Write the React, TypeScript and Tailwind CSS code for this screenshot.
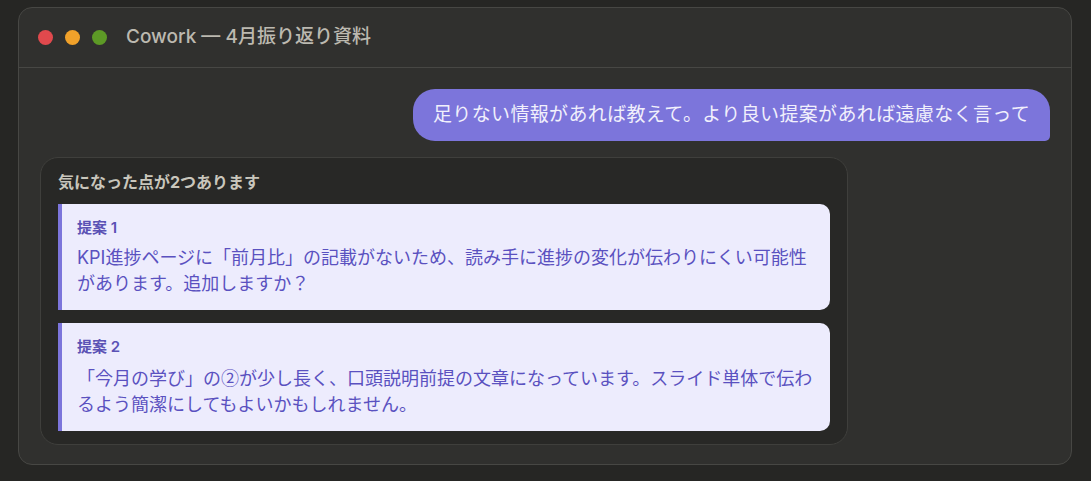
const font = {
  fontFamily: '"Inter", "Noto Sans CJK JP", sans-serif',
};

type Suggestion = { label: string; body: string; cjkOnly?: boolean };

const suggestions: Suggestion[] = [
  {
    label: "提案 1",
    body: "KPI進捗ページに「前月比」の記載がないため、読み手に進捗の変化が伝わりにくい可能性があります。追加しますか？",
  },
  {
    label: "提案 2",
    // ② should come from the CJK font, Inter's version is too wide
    body: "「今月の学び」の②が少し長く、口頭説明前提の文章になっています。スライド単体で伝わるよう簡潔にしてもよいかもしれません。",
    cjkOnly: true,
  },
];

function SuggestionCard({ s }: { s: Suggestion }) {
  return (
    <div
      className={
        s.cjkOnly
          ? "rounded-r-[10px] border-l-[4px] border-[#7c75db] bg-[#edecfd] pl-[15px] pr-[12px] pt-[14px] pb-[15px]"
          : "rounded-r-[10px] border-l-[4px] border-[#7c75db] bg-[#edecfd] pl-[15px] pr-[12px] pt-[14px] pb-[13px]"
      }
    >
      <div className="text-[15px] leading-[20px] font-semibold text-[#5b52b5]">{s.label}</div>
      <p
        className="mt-[7px] text-[18px] leading-[26px] text-[#5a51c0]"
        style={s.cjkOnly ? { fontFamily: '"Noto Sans CJK JP", sans-serif' } : undefined}
      >
        {s.body}
      </p>
    </div>
  );
}

export default function App() {
  return (
    <div className="min-h-screen w-full bg-[#262624] pt-[7px] pl-[18px]" style={font}>
      <div className="flex h-[458px] w-[1054px] flex-col rounded-[14px] border border-[#474744] bg-[#30302e]">
        {/* Title bar */}
        <div className="flex h-[60px] shrink-0 items-center border-b border-[#474744] pl-[19px]">
          <div className="flex gap-[12px]">
            <span className="block h-[15px] w-[15px] rounded-full bg-[#e0494d]" />
            <span className="block h-[15px] w-[15px] rounded-full bg-[#f0a12a]" />
            <span className="block h-[15px] w-[15px] rounded-full bg-[#5d9a26]" />
          </div>
          <div className="ml-[19px] text-[19px] font-medium text-[#bcb9b0]">Cowork — 4月振り返り資料</div>
        </div>

        {/* Conversation */}
        <div className="flex flex-1 flex-col px-[21px] pt-[21px]">
          <div className="self-end rounded-[22px] rounded-br-[5px] bg-[#7c75db] px-[20px] py-[13px] text-[19px] leading-[26px] tracking-[0.35px] text-[#f1f0fc]">
            足りない情報があれば教えて。より良い提案があれば遠慮なく言って
          </div>

          <div className="mt-[16px] w-[808px] rounded-[18px] border border-[#3f3f3c] bg-[#282826] px-[17px] pt-[14px] pb-[13px]">
            <div className="text-[16px] leading-[20px] font-bold text-[#c9c6bc]">気になった点が2つあります</div>
            <div className="mt-[12px] flex flex-col gap-[13px]">
              {suggestions.map((s) => (
                <SuggestionCard key={s.label} s={s} />
              ))}
            </div>
          </div>
        </div>
      </div>
    </div>
  );
}
